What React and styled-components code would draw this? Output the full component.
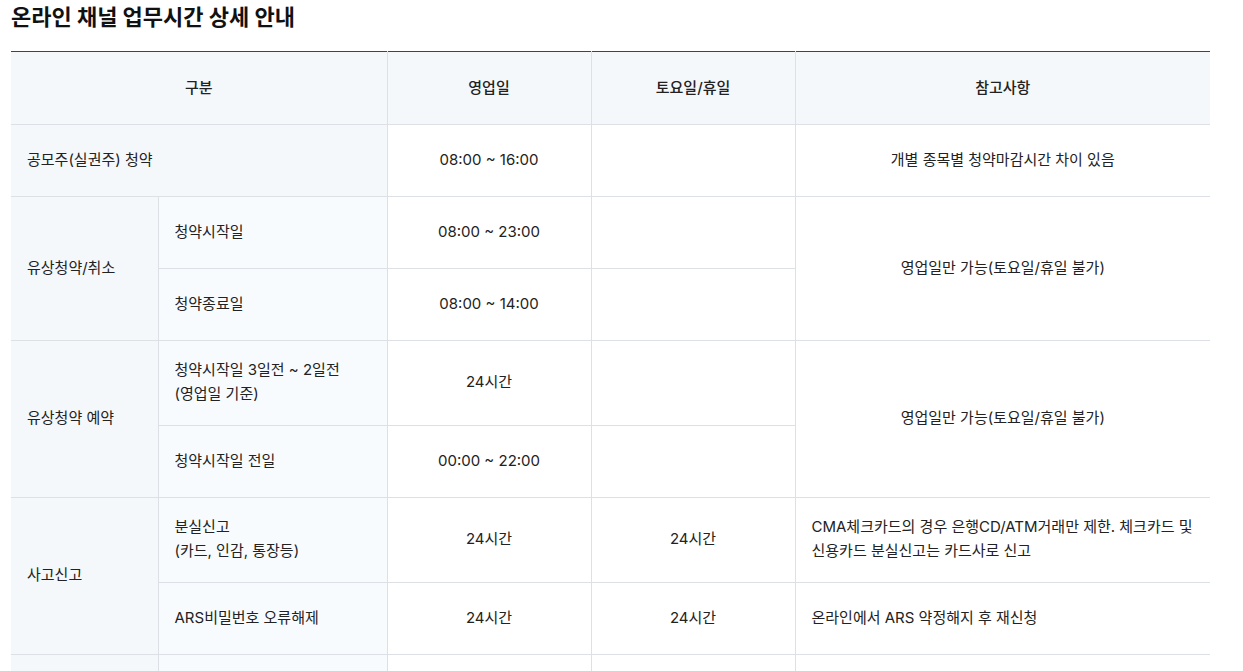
import styled, { createGlobalStyle } from "styled-components";

const GlobalStyle = createGlobalStyle`
  * {
    margin: 0;
    padding: 0;
    box-sizing: border-box;
  }

  body {
    background: #fff;
    color: #222;
    font-family: Inter, "Noto Sans CJK KR", "Noto Sans", sans-serif;
  }
`;

const Page = styled.div`
  padding: 0 33px 0 11px;
`;

const Title = styled.h2`
  font-size: 22px;
  font-weight: 700;
  line-height: 34px;
  color: #111;
  margin-bottom: 17px;
`;

const Table = styled.table`
  width: 1199px;
  border-collapse: collapse;
  table-layout: fixed;
  border-top: 1px solid #444;
  font-size: 15px;
  line-height: 24px;
`;

const Th = styled.th`
  height: 73px;
  background: #f4f8fb;
  font-weight: 500;
  color: #222;
  text-align: center;
  border-bottom: 1px solid #dde1e6;
  border-left: 1px solid #dde1e6;

  &:first-child {
    border-left: none;
  }
`;

const bgFor = {
  group: "#f4f8fb",
  sub: "#f8fbfe",
  plain: "#fff",
};

const Td = styled.td`
  height: 72px;
  padding: 17px 16px 19px;
  background: ${(p) => bgFor[p.$kind || "plain"]};
  text-align: ${(p) => (p.$center ? "center" : "left")};
  vertical-align: middle;
  border-bottom: 1px solid #dde1e6;
  border-left: 1px solid #dde1e6;
  font-weight: 400;
  color: #222;

  &:first-child {
    border-left: ${(p) => (p.$first ? "none" : "1px solid #dde1e6")};
  }
`;

function App() {
  return (
    <>
      <GlobalStyle />
      <Page>
        <Title>온라인 채널 업무시간 상세 안내</Title>
        <Table>
          <colgroup>
            <col style={{ width: 147 }} />
            <col style={{ width: 229 }} />
            <col style={{ width: 204 }} />
            <col style={{ width: 204 }} />
            <col style={{ width: 415 }} />
          </colgroup>
          <thead>
            <tr>
              <Th colSpan={2}>구분</Th>
              <Th>영업일</Th>
              <Th>토요일/휴일</Th>
              <Th>참고사항</Th>
            </tr>
          </thead>
          <tbody>
            <tr>
              <Td $kind="group" $first colSpan={2}>공모주(실권주) 청약</Td>
              <Td $center>08:00 ~ 16:00</Td>
              <Td $center></Td>
              <Td $center>개별 종목별 청약마감시간 차이 있음</Td>
            </tr>
            <tr>
              <Td $kind="group" $first rowSpan={2}>유상청약/취소</Td>
              <Td $kind="sub">청약시작일</Td>
              <Td $center>08:00 ~ 23:00</Td>
              <Td $center></Td>
              <Td $center rowSpan={2}>영업일만 가능(토요일/휴일 불가)</Td>
            </tr>
            <tr>
              <Td $kind="sub">청약종료일</Td>
              <Td $center>08:00 ~ 14:00</Td>
              <Td $center></Td>
            </tr>
            <tr>
              <Td $kind="group" $first rowSpan={2}>유상청약 예약</Td>
              <Td $kind="sub">
                청약시작일 3일전 ~ 2일전
                <br />
                (영업일 기준)
              </Td>
              <Td $center>24시간</Td>
              <Td $center></Td>
              <Td $center rowSpan={2}>영업일만 가능(토요일/휴일 불가)</Td>
            </tr>
            <tr>
              <Td $kind="sub">청약시작일 전일</Td>
              <Td $center>00:00 ~ 22:00</Td>
              <Td $center></Td>
            </tr>
            <tr>
              <Td $kind="group" $first rowSpan={2}>사고신고</Td>
              <Td $kind="sub">
                분실신고
                <br />
                (카드, 인감, 통장등)
              </Td>
              <Td $center>24시간</Td>
              <Td $center>24시간</Td>
              <Td>
                CMA체크카드의 경우 은행CD/ATM거래만 제한. 체크카드 및 신용카드 분실신고는 카드사로 신고
              </Td>
            </tr>
            <tr>
              <Td $kind="sub">ARS비밀번호 오류해제</Td>
              <Td $center>24시간</Td>
              <Td $center>24시간</Td>
              <Td>온라인에서 ARS 약정해지 후 재신청</Td>
            </tr>
            <tr>
              <Td $kind="group" $first></Td>
              <Td $kind="sub"></Td>
              <Td $center></Td>
              <Td $center></Td>
              <Td></Td>
            </tr>
          </tbody>
        </Table>
      </Page>
    </>
  );
}

export default App;
